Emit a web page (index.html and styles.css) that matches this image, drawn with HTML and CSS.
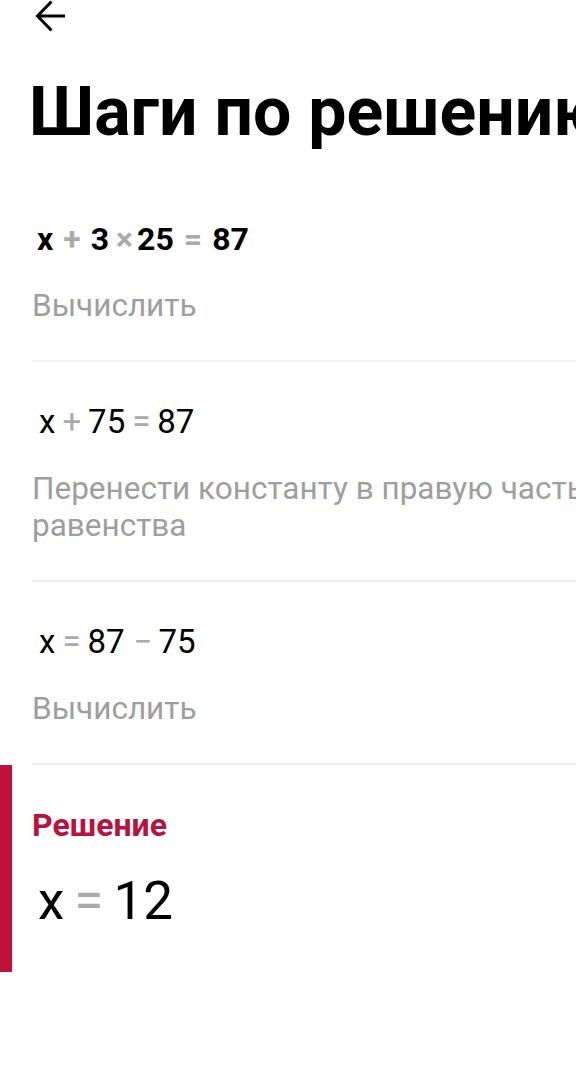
FILE: index.html
```html
<!DOCTYPE html>
<html lang="ru">
<head>
<meta charset="utf-8">
<title>Шаги по решению</title>
<link rel="stylesheet" href="styles.css">
</head>
<body>
<div class="page">
  <header class="topbar">
    <svg class="back" width="36" height="36" viewBox="0 0 36 36" aria-label="Назад">
      <path d="M32 18H5 M18.5 3.5 L4.5 18 L18.5 32.5" fill="none" stroke="#000" stroke-width="3" stroke-linecap="butt" stroke-linejoin="miter"/>
    </svg>
  </header>
  <h1 class="title">Шаги по решению</h1>

  <div class="steps">
    <div class="step">
      <div class="eq eq-bold"><span>x</span><span class="op">+</span><span>3</span><span class="op op-mul">×</span><span>25</span><span class="op">=</span><span>87</span></div>
      <div class="desc">Вычислить</div>
    </div>
    <div class="step">
      <div class="eq"><span>x</span><span class="op">+</span><span>75</span><span class="op">=</span><span>87</span></div>
      <div class="desc">Перенести константу в правую часть равенства</div>
    </div>
    <div class="step">
      <div class="eq"><span>x</span><span class="op">=</span><span>87</span><span class="op op-minus">−</span><span>75</span></div>
      <div class="desc">Вычислить</div>
    </div>
  </div>

  <section class="solution">
    <div class="solution-label">Решение</div>
    <div class="solution-eq"><span>x</span><span class="op">=</span><span>12</span></div>
  </section>
</div>
</body>
</html>
```

FILE: styles.css
```css
html, body {
  margin: 0;
  padding: 0;
  background: #ffffff;
}
body {
  font-family: Roboto, "Noto Sans", "Liberation Sans", sans-serif;
  color: #000000;
  overflow: hidden;
  width: 576px;
}
.page {
  width: 576px;
  overflow: hidden;
}
.topbar {
  height: 34px;
  padding-left: 33px;
}
.back {
  display: block;
  margin-top: -2px;
}
.title {
  margin: 40px 0 0 0;
  padding-left: 29px;
  font-size: 68px;
  line-height: 80px;
  font-weight: 700;
  white-space: nowrap;
}
.steps {
  margin-left: 32px;
  margin-top: 67px;
}
.step {
  padding: 40px 0 36px 0;
  border-bottom: 2px solid #f0f0f0;
}
.step:first-child {
  padding-top: 0;
}
.eq {
  font-size: 33px;
  line-height: 40px;
  white-space: nowrap;
  padding-left: 7px;
  display: flex;
  align-items: baseline;
}
.eq-bold {
  font-weight: 700;
  font-size: 32px;
  padding-left: 5px;
}
.op {
  color: #aaaaaa;
  margin: 0 7px;
}
.eq-bold .op {
  margin: 0 10px;
}
.eq-bold .op-mul {
  margin: 0 4px 0 7px;
}
.eq .op-minus {
  margin: 0 6px 0 9px;
}
.desc {
  margin-top: 28px;
  font-size: 31.5px;
  line-height: 37px;
  color: #9e9e9e;
  width: 590px;
}
.solution {
  border-left: 12px solid #c0103c;
  padding: 40px 0 40px 20px;
}
.solution-label {
  font-size: 32px;
  line-height: 40px;
  font-weight: 700;
  color: #b8123e;
}
.solution-eq {
  margin-top: 25px;
  font-size: 53px;
  line-height: 62px;
  display: flex;
  align-items: baseline;
  padding-left: 6px;
}
.solution-eq .op {
  margin: 0 10px;
}
```
